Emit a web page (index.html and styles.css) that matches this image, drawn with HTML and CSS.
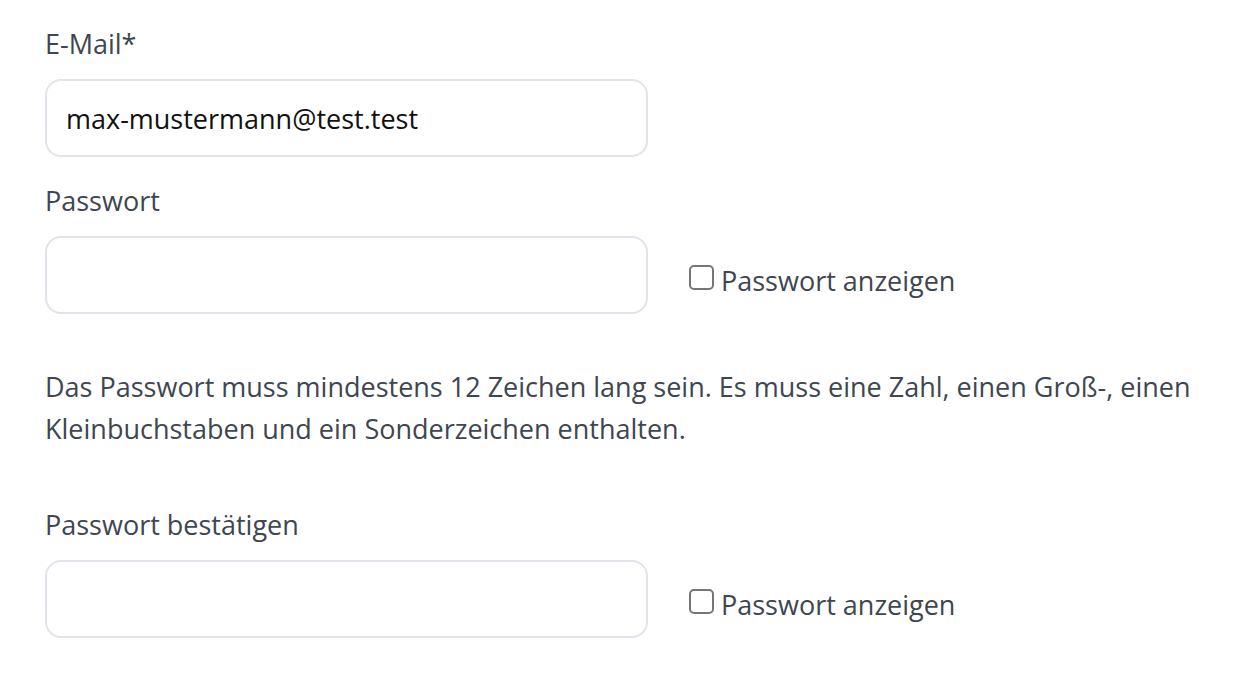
FILE: index.html
```html
<!DOCTYPE html>
<html lang="de">
<head>
<meta charset="utf-8">
<link rel="stylesheet" href="styles.css">
</head>
<body>
<form class="form">
  <div class="field">
    <label class="label" for="email">E-Mail*</label>
    <div class="row">
      <input class="input" id="email" type="text" value="max-mustermann@test.test">
    </div>
  </div>
  <div class="field">
    <label class="label" for="pw">Passwort</label>
    <div class="row">
      <input class="input" id="pw" type="password">
      <label class="show"><input class="check" type="checkbox"><span>Passwort anzeigen</span></label>
    </div>
  </div>
  <p class="hint">Das Passwort muss mindestens 12 Zeichen lang sein. Es muss eine Zahl, einen Groß-, einen Kleinbuchstaben und ein Sonderzeichen enthalten.</p>
  <div class="field">
    <label class="label" for="pw2">Passwort bestätigen</label>
    <div class="row">
      <input class="input" id="pw2" type="password">
      <label class="show"><input class="check" type="checkbox"><span>Passwort anzeigen</span></label>
    </div>
  </div>
</form>
</body>
</html>
```

FILE: styles.css
```css
html, body {
  margin: 0;
  padding: 0;
  background: #ffffff;
}
body {
  font-family: "Open Sans", "Lato", sans-serif;
  font-size: 27px;
  color: #3e4651;
}
.form {
  padding: 24px 0 0 45px;
  width: 1180px;
  display: flex;
  flex-direction: column;
}
.field {
  display: flex;
  flex-direction: column;
  gap: 16px;
}
.field + .field {
  margin-top: 24px;
}
.label {
  display: block;
  line-height: 39px;
  height: 39px;
}
.row {
  display: flex;
  align-items: center;
}
.input {
  box-sizing: border-box;
  width: 603px;
  height: 78px;
  border: 2px solid #e1e4ea;
  border-radius: 16px;
  padding: 0 19px;
  font-family: inherit;
  font-size: 27px;
  color: #111111;
  background: #ffffff;
  outline: none;
}
.show {
  display: flex;
  align-items: center;
  margin-left: 41px;
  margin-top: 12px;
  line-height: 30px;
}
.check {
  appearance: none;
  -webkit-appearance: none;
  box-sizing: border-box;
  width: 25px;
  height: 25px;
  margin: 0 7px 0 0;
  border: 2px solid #767676;
  border-radius: 5px;
  background: #ffffff;
  position: relative;
  top: -4px;
}
.hint {
  margin: 52px 0 55px 0;
  line-height: 42px;
}
```
